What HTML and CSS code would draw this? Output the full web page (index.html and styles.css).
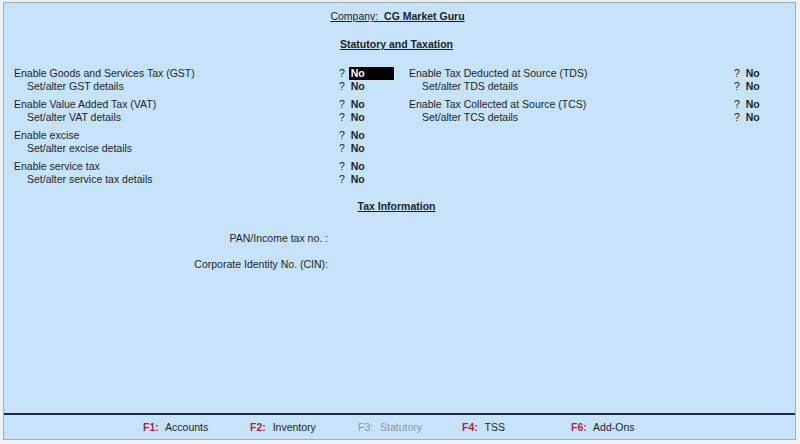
FILE: index.html
```html
<!DOCTYPE html>
<html lang="en">

<head>
    <meta charset="UTF-8">
    <title>Statutory and Taxation</title>
    <link rel="stylesheet" href="styles.css">
</head>

<body>
    <div class="sheet">
        <div class="main">
            <div class="company"><span>Company:&nbsp; </span><b>CG Market Guru</b></div>
            <div class="heading">Statutory and Taxation</div>

            <div class="cols">
                <div class="col">
                    <div class="group">
                        <div class="row"><span>Enable Goods and Services Tax (GST)</span><span class="val">? <b class="active">No</b></span></div>
                        <div class="row sub"><span>Set/alter GST details</span><span class="val">? <b>No</b></span></div>
                    </div>
                    <div class="group">
                        <div class="row"><span>Enable Value Added Tax (VAT)</span><span class="val">? <b>No</b></span></div>
                        <div class="row sub"><span>Set/alter VAT details</span><span class="val">? <b>No</b></span></div>
                    </div>
                    <div class="group">
                        <div class="row"><span>Enable excise</span><span class="val">? <b>No</b></span></div>
                        <div class="row sub"><span>Set/alter excise details</span><span class="val">? <b>No</b></span></div>
                    </div>
                    <div class="group">
                        <div class="row"><span>Enable service tax</span><span class="val">? <b>No</b></span></div>
                        <div class="row sub"><span>Set/alter service tax details</span><span class="val">? <b>No</b></span></div>
                    </div>
                </div>
                <div class="col">
                    <div class="group">
                        <div class="row"><span>Enable Tax Deducted at Source (TDS)</span><span class="val">? <b>No</b></span></div>
                        <div class="row sub"><span>Set/alter TDS details</span><span class="val">? <b>No</b></span></div>
                    </div>
                    <div class="group">
                        <div class="row"><span>Enable Tax Collected at Source (TCS)</span><span class="val">? <b>No</b></span></div>
                        <div class="row sub"><span>Set/alter TCS details</span><span class="val">? <b>No</b></span></div>
                    </div>
                </div>
            </div>

            <div class="heading tax">Tax Information</div>
            <div class="info">
                <div class="info-row">PAN/Income tax no. :</div>
                <div class="info-row">Corporate Identity No. (CIN):</div>
            </div>
        </div>

        <div class="footer">
            <div><span class="key">F1:</span> Accounts</div>
            <div><span class="key">F2:</span> Inventory</div>
            <div class="off"><span class="key">F3:</span> Statutory</div>
            <div><span class="key">F4:</span> TSS</div>
            <div><span class="key">F6:</span> Add-Ons</div>
        </div>
    </div>
</body>

</html>
```

FILE: styles.css
```css
* {
    margin: 0;
    padding: 0;
    box-sizing: border-box;
}

html, body {
    height: 100%;
}

body {
    background-color: #eef2f5;
    font-family: "Liberation Sans", Arial, sans-serif;
    font-size: 10.5px;
    line-height: 13px;
    color: #1c1f2a;
    padding: 2px 4px 4px 3px;
}

.sheet {
    height: 100%;
    display: flex;
    flex-direction: column;
    background-color: #c6e3fa;
    border: 1px solid #a3adb5;
}

.main {
    flex: 1;
    padding: 7px 0 0 10px;
}

.company {
    text-align: center;
    text-decoration: underline;
    padding-right: 14px;
}

.heading {
    margin-top: 15px;
    text-align: center;
    text-decoration: underline;
    font-weight: bold;
    padding-right: 16px;
}

.cols {
    display: flex;
    margin-top: 16px;
}

.col {
    width: 395px;
    flex-shrink: 0;
}

.col + .col {
    flex: 1;
}

.group {
    margin-bottom: 5px;
}

.row {
    display: grid;
    grid-template-columns: 325px auto;
}

.row.sub span:first-child {
    padding-left: 13px;
}

.val {
    word-spacing: 1px;
}

.val b {
    display: inline-block;
    width: 45px;
    padding-left: 2px;
}

.val b.active {
    background-color: #000;
    color: #fff;
}

.heading.tax {
    margin-top: 9px;
}

.info {
    margin-top: 19px;
    width: 314px;
    text-align: right;
}

.info-row {
    margin-top: 13px;
}

.footer {
    height: 26px;
    border-top: 2px solid #1f2b3a;
    display: grid;
    grid-template-columns: 107px 108px 104px 109px auto;
    align-items: center;
    padding-left: 139px;
    font-size: 10.5px;
}

.footer .key {
    color: #b41f3d;
    font-weight: bold;
    margin-right: 4px;
}

.footer .off, .footer .off .key {
    color: #8e959c;
    font-weight: normal;
}
```
